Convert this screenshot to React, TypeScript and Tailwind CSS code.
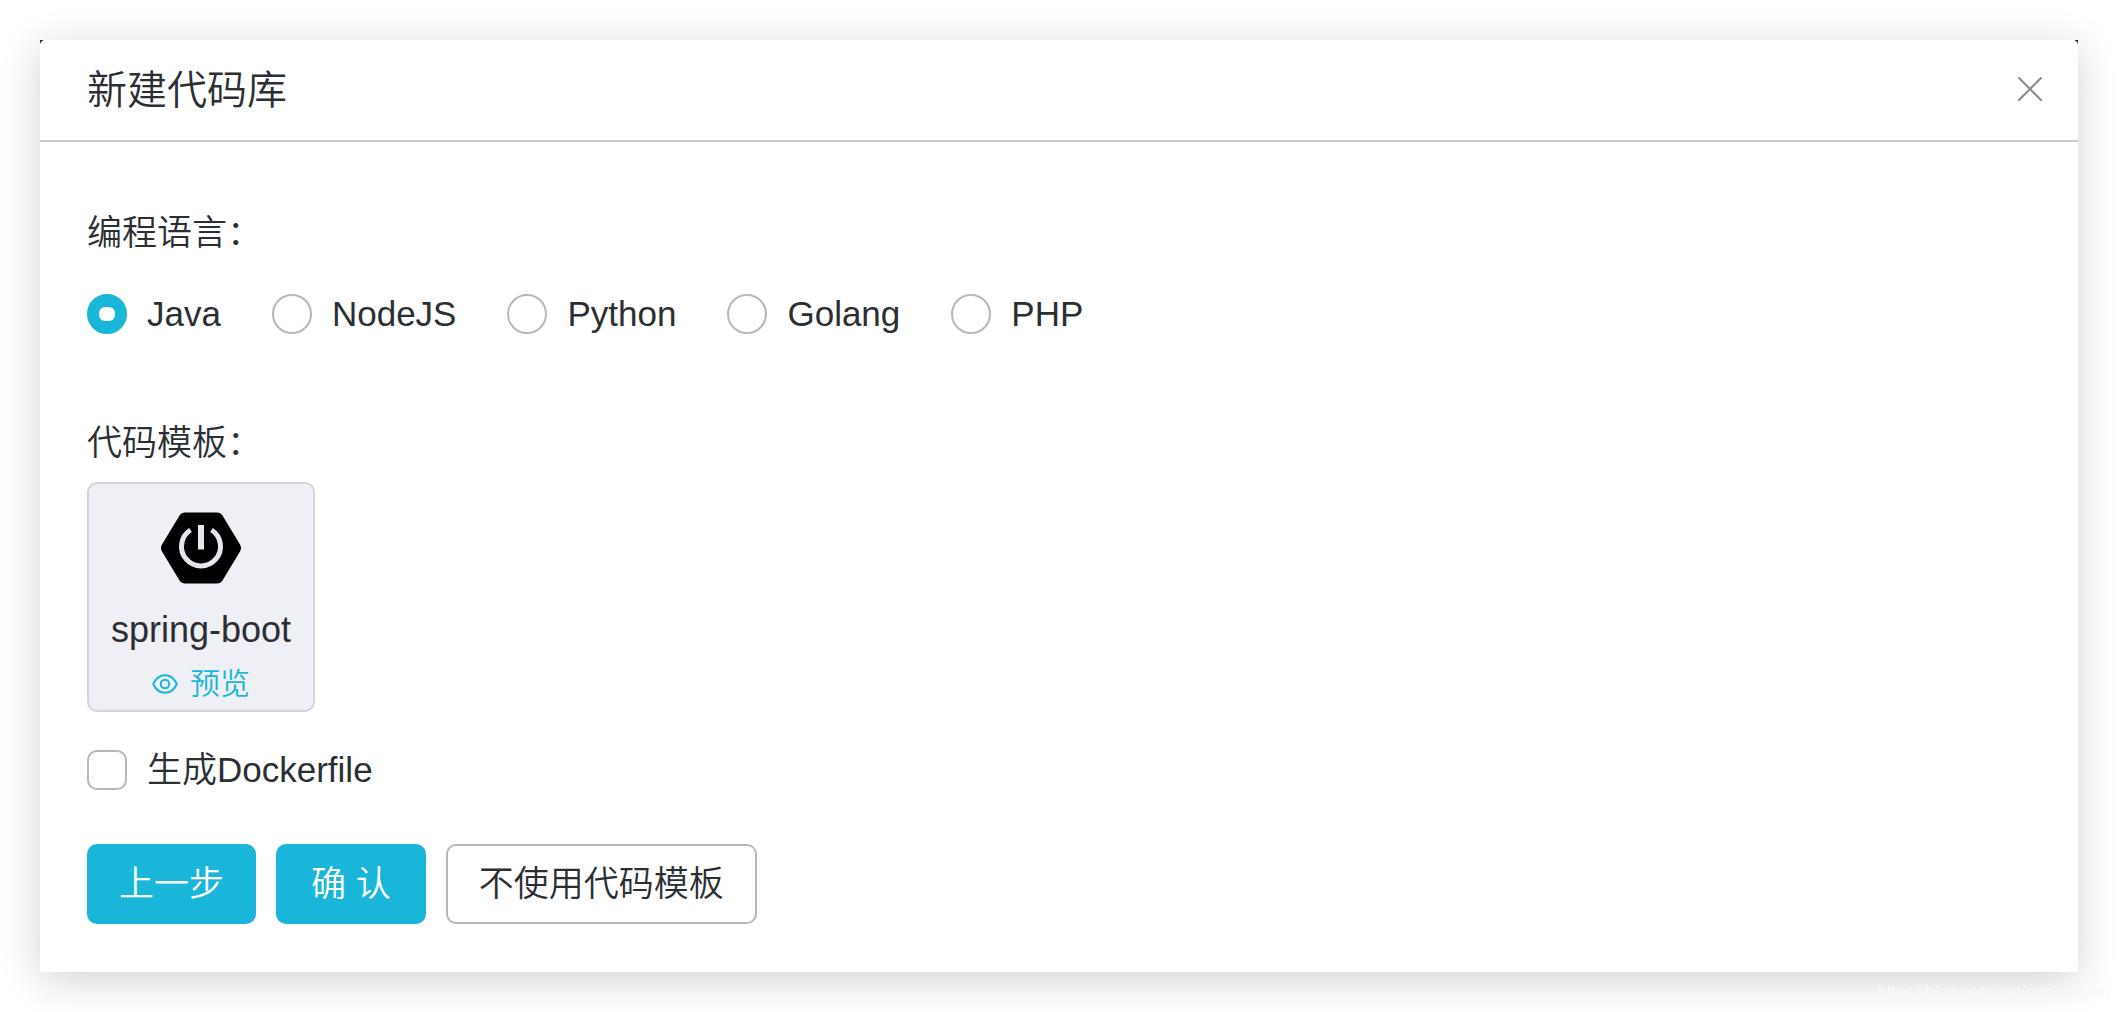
import { useState } from 'react';

const languages = ['Java', 'NodeJS', 'Python', 'Golang', 'PHP'];

const SpringBootIcon = () => (
  <svg className="w-20 h-[72px]" viewBox="0 0 80 72" fill="none" aria-hidden="true">
    <path
      d="M24 0.5H56Q59.500 0.500 61.500 3.500L79 32.500Q81 36 79 39.500L61.500 68.500Q59.500 71.500 56 71.500H24Q20.500 71.500 18.500 68.500L1 39.500Q-1 36 1 32.500L18.500 3.500Q20.500 0.500 24 0.500Z"
      fill="#000"
    />
    <path d="M29.500 18A19.500 19.500 0 1 0 50.500 18" stroke="#e6e6ee" strokeWidth="5" />
    <path d="M40 13V37.500" stroke="#e6e6ee" strokeWidth="6" />
  </svg>
);

const EyeIcon = () => (
  <svg className="w-[26px] h-5" viewBox="0 0 26 20" fill="none" stroke="currentColor" strokeWidth="2" aria-hidden="true">
    <path d="M1.200 10C4 4 8 1.200 13 1.200S22 4 24.800 10C22 16 18 18.800 13 18.800S4 16 1.200 10Z" strokeLinejoin="round" />
    <circle cx="13" cy="10" r="4.200" />
  </svg>
);

const App = () => {
  const [language, setLanguage] = useState('Java');
  const [dockerfile, setDockerfile] = useState(false);

  return (
    <div
      lang="zh-CN"
      className="relative min-h-screen bg-white p-10 overflow-hidden font-['Liberation_Sans','Noto_Sans_CJK_SC',sans-serif] font-[350] text-[35px] leading-10 text-[#2b2f33]"
    >
      <div role="dialog" aria-labelledby="dialog-title" className="bg-white rounded-b-[2px] shadow-[0_8px_40px_rgba(0,0,0,0.18)]">
        {/* Header */}
        <div className="bg-[#222]">
          <div className="flex items-center justify-between h-[102px] pl-[47px] pr-9 bg-white rounded-t-[5px] border-b-2 border-[#ccc]">
            <h1 id="dialog-title" className="text-[40px] leading-[50px] font-[350]">新建代码库</h1>
            <button type="button" aria-label="关闭" className="mb-0.5 text-[#8a8c90]">
              <svg className="w-6 h-6" viewBox="0 0 24 24" fill="none" stroke="currentColor" strokeWidth="2" strokeLinecap="round">
                <path d="M1 1L23 23M23 1L1 23" />
              </svg>
            </button>
          </div>
        </div>

        {/* Body */}
        <form className="pt-[66px] px-[47px] pb-12" onSubmit={e => e.preventDefault()}>
          <fieldset>
            <legend className="leading-[50px]">编程语言：</legend>
            <div className="flex flex-wrap gap-x-[51px] gap-y-4 mt-9">
              {languages.map(name => (
                <label key={name} className="flex items-center gap-5">
                  <input
                    type="radio"
                    name="language"
                    value={name}
                    checked={language === name}
                    onChange={() => setLanguage(name)}
                    className="appearance-none grid place-content-center w-10 h-10 rounded-full border-2 border-[#b8b8b8] checked:border-[#1ab6da] checked:bg-[#1ab6da] before:w-4 before:h-3.5 before:rounded-[6px] before:bg-white"
                  />
                  {name}
                </label>
              ))}
            </div>
          </fieldset>

          <h2 className="mt-[84px] leading-[50px] font-[350]">代码模板：</h2>
          <div className="flex flex-col items-center w-[228px] mt-3.5 pt-7 pb-1.5 bg-[#eff0f6] border-2 border-[#d3d5da] rounded-[10px]">
            <SpringBootIcon />
            <span className="mt-[26px] text-[36px] leading-10">spring-boot</span>
            <a href="#preview" className="flex items-center gap-3 mt-3.5 text-[30px] leading-10 text-[#1ab6da]">
              <EyeIcon />
              预览
            </a>
          </div>

          <label className="flex items-center gap-5 w-fit mt-[38px]">
            <input
              type="checkbox"
              checked={dockerfile}
              onChange={e => setDockerfile(e.target.checked)}
              className="appearance-none w-10 h-10 rounded-[10px] border-2 border-[#b8b8b8] checked:border-[#1ab6da] checked:bg-[#1ab6da]"
            />
            生成Dockerfile
          </label>

          {/* Actions */}
          <div className="flex flex-wrap gap-5 mt-[54px]">
            <button type="button" className="h-20 px-8 rounded-[10px] bg-[#1ab6da] text-white">上一步</button>
            <button type="submit" className="h-20 px-[35px] rounded-[10px] bg-[#1ab6da] text-white">确 认</button>
            <button type="button" className="h-20 px-[31px] rounded-[10px] border-2 border-[#b8b8b8] bg-white">不使用代码模板</button>
          </div>
        </form>
      </div>

      <p className="absolute right-2 bottom-2 text-base leading-6 text-[#f8f8f8]">https://blog.csdn.net/cuichongxin</p>
    </div>
  );
};

export default App;
